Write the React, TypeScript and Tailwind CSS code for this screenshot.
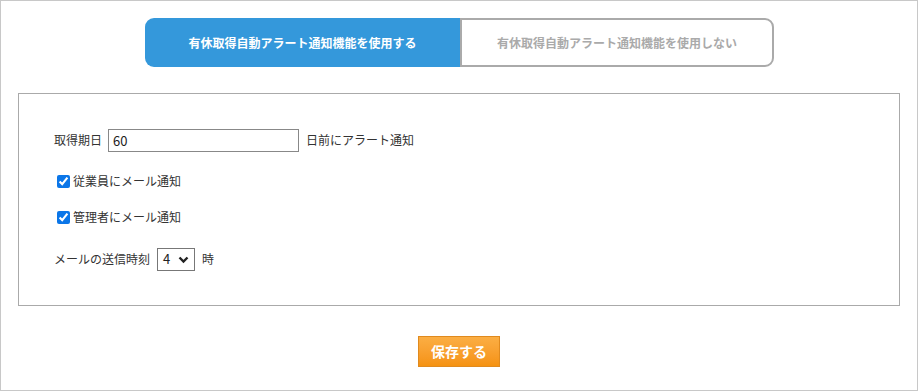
export default function App() {
  return (
    <div
      className="w-[918px] h-[391px] border border-[#c8c8c8] bg-white text-[#333] text-[12px]"
      style={{ fontFamily: '"Noto Sans CJK JP", "Noto Sans", sans-serif' }}
    >
      <div className="flex justify-center pt-[17px] pl-[1px]">
        <div className="flex h-[49px]">
          <button className="w-[315px] rounded-l-[9px] bg-[#3498db] text-white font-bold text-[12px]">
            有休取得自動アラート通知機能を使用する
          </button>
          <button className="w-[314px] rounded-r-[9px] border-2 border-[#aaa] bg-white text-[#aaa] font-bold text-[12px]">
            有休取得自動アラート通知機能を使用しない
          </button>
        </div>
      </div>

      <div className="mx-[17px] mt-[26px] h-[213px] border border-[#aaa] pl-[35px] pt-[34px]">
        <div className="flex items-center h-[24px]">
          <span>取得期日</span>
          <input
            defaultValue="60"
            className="ml-[6px] w-[191px] h-[23px] border border-[#888] px-[4px] text-[13px] text-[#222] outline-none"
          />
          <span className="ml-[7px]">日前にアラート通知</span>
        </div>

        <label className="mt-[19px] flex items-center h-[20px] pl-[3px]">
          <input type="checkbox" defaultChecked className="w-[13px] h-[13px] accent-[#0b76e8]" />
          <span className="ml-[3px]">従業員にメール通知</span>
        </label>

        <label className="mt-[16px] flex items-center h-[20px] pl-[3px]">
          <input type="checkbox" defaultChecked className="w-[13px] h-[13px] accent-[#0b76e8]" />
          <span className="ml-[3px]">管理者にメール通知</span>
        </label>

        <div className="mt-[20px] flex items-center h-[24px]">
          <span>メールの送信時刻</span>
          <div className="relative ml-[7px] w-[38px] h-[23px] border border-[#777] flex items-center">
            <span className="pl-[5px] text-[13px] text-[#222]">4</span>
            <svg
              className="absolute right-[5px] top-[7px]"
              width="11"
              height="8"
              viewBox="0 0 11 8"
              fill="none"
              stroke="#222"
              strokeWidth="2.4"
            >
              <path d="M1.5 1.5l4 4 4-4" />
            </svg>
          </div>
          <span className="ml-[7px]">時</span>
        </div>
      </div>

      <div className="flex justify-center mt-[30px]">
        <button className="w-[82px] h-[31px] border border-[#e08a1e] bg-gradient-to-b from-[#fbae43] to-[#f5920f] text-white font-bold text-[14px]">
          保存する
        </button>
      </div>
    </div>
  );
}
